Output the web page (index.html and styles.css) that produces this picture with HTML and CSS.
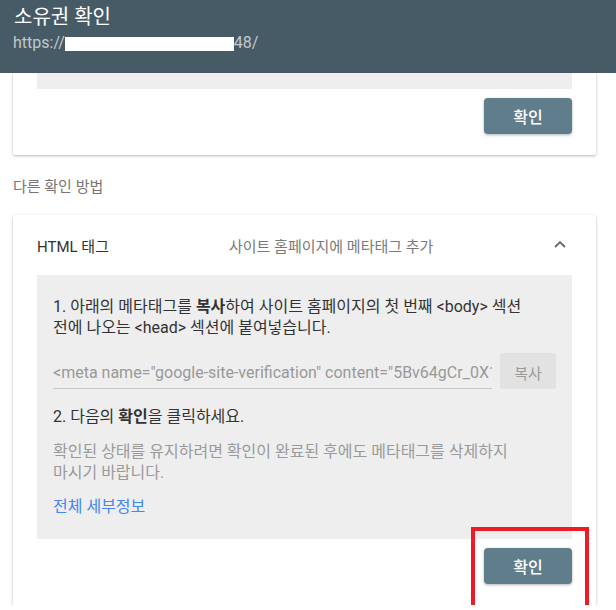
FILE: index.html
```html
<!DOCTYPE html>
<html lang="ko">
<head>
    <meta charset="UTF-8">
    <meta name="viewport" content="width=device-width, initial-scale=1.0">
    <title>소유권 확인</title>
    <link rel="stylesheet" href="styles.css">
</head>
<body>
    <div class="page">
        <header class="top-bar">
            <h1 class="top-title">소유권 확인</h1>
            <div class="top-url">https://<span class="redact"></span>48/</div>
        </header>

        <div class="content">
            <!-- previous method, scrolled mostly out of view -->
            <div class="card card-cut">
                <div class="method-body method-body-cut"></div>
                <div class="card-actions">
                    <button class="btn-verify">확인</button>
                </div>
            </div>

            <div class="section-label">다른 확인 방법</div>

            <div class="card card-open">
                <div class="method-head">
                    <span class="method-name">HTML 태그</span>
                    <span class="method-desc">사이트 홈페이지에 메타태그 추가</span>
                    <svg class="chevron" width="12" height="7" viewBox="0 0 12 7">
                        <polyline points="1,6 6,1.2 11,6" fill="none" stroke="#5f6368" stroke-width="1.8"/>
                    </svg>
                </div>
                <div class="method-body">
                    <p class="step">1. 아래의 메타태그를 <b>복사</b>하여 사이트 홈페이지의 첫 번째 &lt;body&gt; 섹션<br>전에 나오는 &lt;head&gt; 섹션에 붙여넣습니다.</p>
                    <div class="copy-row">
                        <div class="meta-field">&lt;meta name="google-site-verification" content="5Bv64gCr_0X1</div>
                        <button class="btn-copy">복사</button>
                    </div>
                    <p class="step step-2">2. 다음의 <b>확인</b>을 클릭하세요.</p>
                    <p class="note">확인된 상태를 유지하려면 확인이 완료된 후에도 메타태그를 삭제하지<br>마시기 바랍니다.</p>
                    <a href="#" class="details-link">전체 세부정보</a>
                </div>
                <div class="card-actions">
                    <div class="marked">
                        <button class="btn-verify">확인</button>
                        <span class="mark-box"></span>
                    </div>
                </div>
            </div>
        </div>
    </div>
</body>
</html>
```

FILE: styles.css
```css
/* CSS */
body {
    margin: 0;
    background: #fff;
    font-family: Roboto, "Noto Sans CJK KR", sans-serif;
    color: #212121;
}

.page {
    width: 616px;
    height: 605px;
    overflow: hidden;
}

.top-bar {
    height: 73px;
    box-sizing: border-box;
    padding: 4px 14px 0;
    background: #475b66;
}

.top-title {
    margin: 0;
    font-size: 20px;
    line-height: 26px;
    font-weight: 400;
    color: #fff;
}

.top-url {
    margin-top: 3px;
    margin-left: -1px;
    font-size: 16px;
    line-height: 20px;
    color: #c1c8cc;
}

.redact {
    display: inline-block;
    width: 169px;
    height: 14px;
    background: #fff;
    vertical-align: -3px;
}

.content {
    padding: 0 20px 0 13px;
}

.card {
    background: #fff;
    border-radius: 2px;
    box-shadow: 0 1px 3px rgba(0, 0, 0, 0.28);
}

.card-cut {
    border-radius: 0 0 2px 2px;
    padding-bottom: 21px;
}

.card-open {
    margin-top: 18px;
    padding-bottom: 40px;
}

.method-body {
    margin: 0 24px;
    padding: 21px 16px 22px;
    background: #eeeeee;
}

.method-body-cut {
    height: 16px;
    padding: 0;
}

.card-actions {
    display: flex;
    justify-content: flex-end;
    padding: 9px 24px 0;
}

.btn-verify {
    width: 88px;
    height: 36px;
    border: none;
    border-radius: 4px;
    background: #607d8b;
    color: #fff;
    font-family: Roboto, "Noto Sans CJK KR", sans-serif;
    font-size: 16px;
    font-weight: 500;
    box-shadow: 0 1px 3px rgba(0, 0, 0, 0.3);
}

.section-label {
    margin-top: 22px;
    font-size: 15px;
    line-height: 20px;
    color: #757575;
}

.method-head {
    display: flex;
    align-items: center;
    height: 60px;
    padding: 0 30px 0 24px;
}

.method-name {
    width: 192px;
    font-size: 15px;
    color: #333;
}

.method-desc {
    flex: 1;
    font-size: 15px;
    color: #7a7a7a;
}

.chevron {
    margin-top: -1px;
}

.step {
    margin: 0;
    font-size: 16px;
    line-height: 21px;
    color: #333;
}

.step b {
    font-weight: 700;
}

.copy-row {
    display: flex;
    gap: 8px;
    margin-top: 15px;
}

.meta-field {
    flex: 1;
    min-width: 0;
    overflow: hidden;
    white-space: nowrap;
    padding: 10px 0 4px;
    font-size: 16px;
    line-height: 20px;
    color: #999;
    border-bottom: 1px solid #c8c8c8;
}

.btn-copy {
    flex: none;
    width: 56px;
    height: 36px;
    padding: 5px 0 0;
    align-self: flex-start;
    border: none;
    border-radius: 3px;
    background: #e2e2e2;
    color: #9a9a9a;
    font-family: Roboto, "Noto Sans CJK KR", sans-serif;
    font-size: 15px;
    line-height: 20px;
    vertical-align: top;
}

.step-2 {
    margin-top: 17px;
}

.note {
    margin: 14px 0 0;
    font-size: 16px;
    line-height: 21px;
    color: #9a9a9a;
}

.details-link {
    display: block;
    margin-top: 13px;
    font-size: 16px;
    line-height: 21px;
    color: #4285f4;
    text-decoration: none;
}

.marked {
    position: relative;
}

.mark-box {
    position: absolute;
    left: -13px;
    right: -17px;
    top: -21px;
    bottom: -40px;
    border: 4px solid #ed1c24;
}
```
